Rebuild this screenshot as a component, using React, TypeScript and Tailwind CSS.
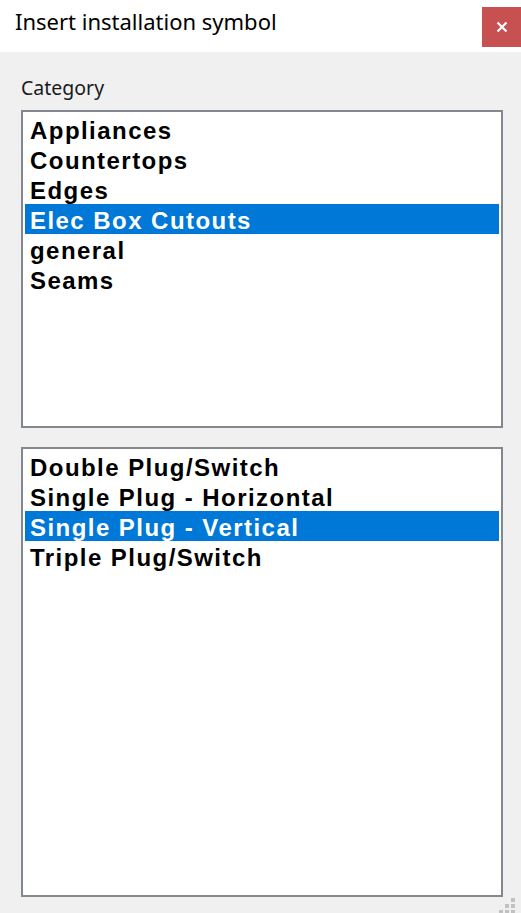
import React from 'react';

const categories = ['Appliances', 'Countertops', 'Edges', 'Elec Box Cutouts', 'general', 'Seams'];
const symbols = ['Double Plug/Switch', 'Single Plug - Horizontal', 'Single Plug - Vertical', 'Triple Plug/Switch'];

function ListBox({ items, selected, height }: { items: string[]; selected: string; height: string }) {
  return (
    <div className={`${height} w-[482px] bg-white border-2 border-[#828790] p-[2px] overflow-hidden`}>
      {items.map((item) => (
        <div
          key={item}
          className={`h-[30px] pt-[3px] pl-[5px] leading-[27px] text-[24px] font-bold tracking-[1.45px] whitespace-nowrap ${
            item === selected ? 'bg-[#0078d7] text-white' : 'text-black'
          }`}
          style={{ fontFamily: '"Liberation Sans", Arial, sans-serif' }}
        >
          {item}
        </div>
      ))}
    </div>
  );
}

export default function App() {
  return (
    <div className="relative w-[521px] h-[913px] bg-[#f0f0f0] overflow-hidden" style={{ fontFamily: '"Noto Sans", sans-serif' }}>
      {/* Title bar */}
      <div className="h-[52px] bg-white flex items-start justify-between">
        <div className="pl-[15px] pt-[7px] text-[22px] leading-[28px] text-black">Insert installation symbol</div>
        <button className="mt-[7px] w-[39px] h-[40px] bg-[#c75050] flex items-center justify-center">
          <svg width="12" height="12" viewBox="0 0 12 12">
            <path d="M1.5 1.5 L10.5 10.5 M10.5 1.5 L1.5 10.5" stroke="#fff" strokeWidth="2.2" />
          </svg>
        </button>
      </div>

      {/* Body */}
      <div className="px-[21px] pt-[23px] flex flex-col">
        <div className="text-[19.5px] leading-[26px] text-[#1a1a1a] mb-[9px]">Category</div>
        <ListBox items={categories} selected="Elec Box Cutouts" height="h-[318px]" />
        <div className="h-[19px]" />
        <ListBox items={symbols} selected="Single Plug - Vertical" height="h-[450px]" />
      </div>

      {/* Size grip */}
      <svg className="absolute right-[6px] bottom-0" width="16" height="15" viewBox="0 0 16 15">
        <g fill="#c2c2c2">
          <rect x="12" y="0" width="4" height="4" />
          <rect x="6" y="6" width="4" height="4" />
          <rect x="12" y="6" width="4" height="4" />
          <rect x="0" y="12" width="4" height="3" />
          <rect x="6" y="12" width="4" height="3" />
          <rect x="12" y="12" width="4" height="3" />
        </g>
      </svg>
    </div>
  );
}
